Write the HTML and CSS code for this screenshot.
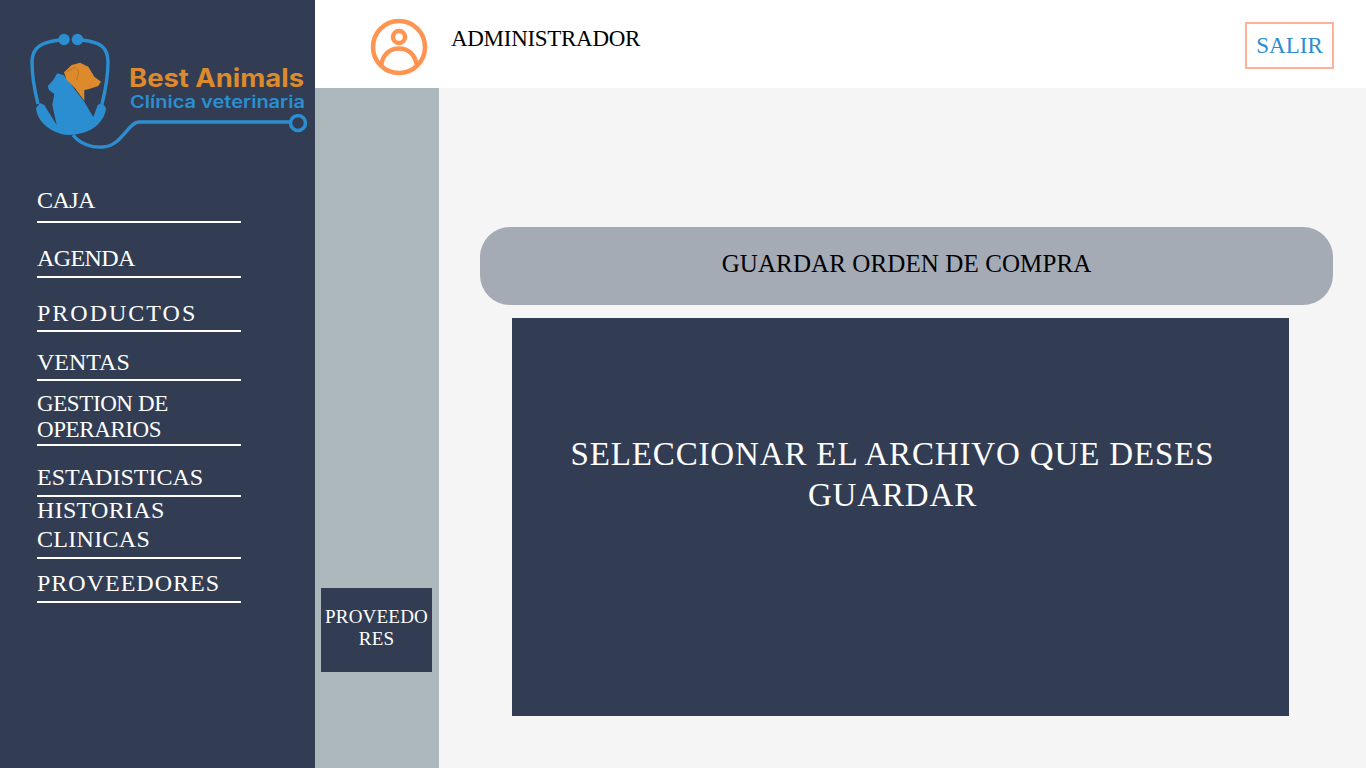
FILE: index.html
```html
<!DOCTYPE html>
<html lang="es">

<head>
    <meta charset="UTF-8">
    <title>Best Animals</title>
    <link rel="stylesheet" href="styles.css">
</head>

<body>
    <div class="page">
        <aside class="sidebar">
            <svg class="logo" viewBox="0 0 315 160" width="315" height="160">
                <g fill="none" stroke="#2b8ed0" stroke-width="3.4">
                    <path d="M60 40 C42 42 32 47 32 62 C32 78 35 92 38 104" />
                    <path d="M82 40 C100 42 108 47 108 62 C108 78 105 92 102 104" />
                    <path d="M73 135 C80 144 92 148 103 147 C122 146 128 122 139 122 L290 122" />
                    <circle cx="298" cy="123" r="7.5" stroke-width="3.5" />
                </g>
                <circle cx="64" cy="39.5" r="5.7" fill="#2b8ed0" />
                <circle cx="77.5" cy="39.5" r="5.7" fill="#2b8ed0" />
                <path fill="#2b8ed0"
                    d="M47.7 86 L53.3 80 L57.3 73.3 L63.3 75 L65 76.7 L84.3 101.7 L93.3 117.3 L97.7 105 L102.3 102.7 L106 108 C105 121 92 135 68 135 C52 134 37 122 36 108 L40 103 L44.3 105 L56.7 125 L52.3 105 L54.3 94 L49 90 Z" />
                <path fill="#dc8a2c"
                    d="M64 72.3 L71.7 65 L80 62.7 L88.3 66.7 L94.3 76.7 L101 81.7 L98.3 86 L88.3 89.3 L84.3 90 L84.3 100.7 L75 88.3 L66.7 80 Z" />
                <path fill="none" stroke="#b66f1f" stroke-width="0.8" d="M66.7 71.7 L75 67.3 C78 68 79 72 78.3 74 L76.7 80" />
                <text class="logo-name" x="129" y="87" textLength="175" lengthAdjust="spacingAndGlyphs">Best Animals</text>
                <text class="logo-sub" x="130" y="108" textLength="175" lengthAdjust="spacingAndGlyphs">Clínica veterinaria</text>
            </svg>
            <nav class="nav">
                <a class="nav-item nav-tight">CAJA</a>
                <a class="nav-item nav-tight">AGENDA</a>
                <a class="nav-item nav-wide">PRODUCTOS</a>
                <a class="nav-item">VENTAS</a>
                <a class="nav-item nav-small">GESTION DE OPERARIOS</a>
                <a class="nav-item">ESTADISTICAS</a>
                <a class="nav-item nav-tall">HISTORIAS CLINICAS</a>
                <a class="nav-item nav-mid">PROVEEDORES</a>
            </nav>
        </aside>

        <div class="content">
            <header class="topbar">
                <svg class="user-icon" viewBox="0 0 58 58" width="58" height="58" fill="none" stroke="#ff9350" stroke-width="4.5">
                    <circle cx="29" cy="29" r="26" />
                    <circle cx="29" cy="19" r="6" />
                    <path d="M11 48 C13 36 20 30.5 29 30.5 C38 30.5 45 36 47 48" />
                </svg>
                <span class="user-name">ADMINISTRADOR</span>
                <button class="logout">SALIR</button>
            </header>

            <div class="body">
                <div class="subnav">
                    <button class="subnav-btn">PROVEEDORES</button>
                </div>
                <main class="main">
                    <div class="title-pill">GUARDAR ORDEN DE COMPRA</div>
                    <div class="file-box">
                        <p class="file-text">SELECCIONAR EL ARCHIVO QUE DESES GUARDAR</p>
                    </div>
                </main>
            </div>
        </div>
    </div>
</body>

</html>
```

FILE: styles.css
```css
* {
    box-sizing: border-box;
}

body {
    margin: 0;
    font-family: "Liberation Serif", serif;
    background-color: #f5f5f5;
}

.page {
    display: flex;
    width: 1366px;
    height: 768px;
    overflow: hidden;
}

/* barra lateral */
.sidebar {
    width: 315px;
    flex-shrink: 0;
    background-color: #323d54;
}

.logo {
    display: block;
}

.logo-name {
    font-family: "Inter", sans-serif;
    font-size: 25px;
    font-weight: 700;
    fill: #dc8a2c;
}

.logo-sub {
    font-family: "Inter", sans-serif;
    font-size: 17px;
    font-weight: 600;
    fill: #2b8ed0;
}

.nav {
    display: flex;
    flex-direction: column;
    width: 204px;
    margin-top: 20px;
    margin-left: 37px;
}

.nav-item {
    display: flex;
    align-items: flex-end;
    height: 54px;
    padding-bottom: 3px;
    border-bottom: 2px solid #fff;
    color: #fff;
    font-size: 24px;
}

.nav-item:nth-child(1) {
    height: 43px;
    padding-bottom: 7px;
}

.nav-item:nth-child(2) {
    height: 55px;
    padding-bottom: 4px;
}

.nav-item:nth-child(4) {
    height: 49px;
}

.nav-item:nth-child(6) {
    height: 51px;
    padding-bottom: 4px;
}

.nav-item:nth-child(8) {
    height: 44px;
    padding-bottom: 4px;
}

.nav-tight {
    letter-spacing: -0.6px;
}

.nav-wide {
    letter-spacing: 2px;
}

.nav-mid {
    letter-spacing: 1px;
}

.nav-small {
    height: 65px;
    padding-bottom: 1px;
    font-size: 23px;
    line-height: 26px;
    letter-spacing: -0.4px;
}

.nav-tall {
    height: 62px;
    padding-bottom: 3px;
    line-height: 29px;
    letter-spacing: 0.3px;
}

/* cabecera */
.content {
    flex: 1;
    display: flex;
    flex-direction: column;
}

.topbar {
    display: flex;
    align-items: flex-start;
    height: 88px;
    padding: 18px 32px 0 55px;
    background-color: #fff;
}

.user-icon {
    flex-shrink: 0;
}

.user-name {
    margin-left: 23px;
    margin-top: 8px;
    font-size: 23px;
    letter-spacing: -0.3px;
    color: #000;
}

.logout {
    margin-left: auto;
    margin-top: 4px;
    width: 89px;
    height: 47px;
    border: 2px solid #ffb199;
    background: #fff;
    color: #2b8ed0;
    font-family: inherit;
    font-size: 23px;
}

.body {
    flex: 1;
    display: flex;
}

.subnav {
    display: flex;
    align-items: flex-end;
    width: 124px;
    padding-left: 6px;
    padding-bottom: 96px;
    background-color: #adb8bc;
}

.subnav-btn {
    width: 111px;
    height: 84px;
    padding: 0 2px 4px;
    border: none;
    background-color: #323d54;
    color: #fff;
    font-family: inherit;
    font-size: 19px;
    line-height: 22px;
    letter-spacing: 0.2px;
    word-break: break-all;
}

.main {
    flex: 1;
    padding: 139px 33px 0 41px;
}

.title-pill {
    display: flex;
    align-items: center;
    justify-content: center;
    height: 78px;
    padding-bottom: 4px;
    border-radius: 30px;
    background-color: #a5abb5;
    color: #000;
    font-size: 25px;
    letter-spacing: 0.1px;
}

.file-box {
    width: 777px;
    height: 398px;
    margin-top: 13px;
    margin-left: 32px;
    padding: 116px 40px 0 24px;
    background-color: #323d54;
}

.file-text {
    margin: 0;
    color: #fff;
    font-size: 33px;
    line-height: 41px;
    letter-spacing: 0.85px;
    text-align: center;
}
```
